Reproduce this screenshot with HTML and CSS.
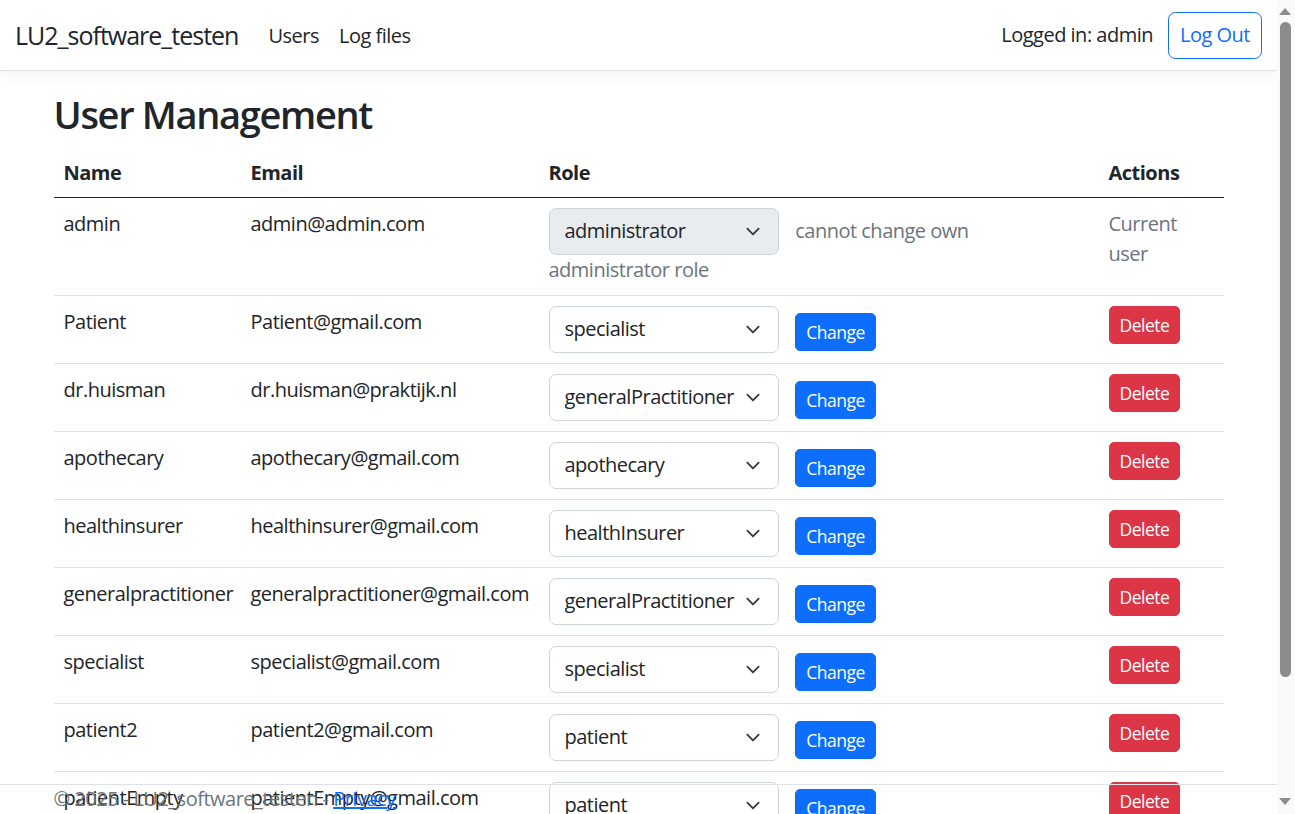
FILE: index.html
```html
<!DOCTYPE html>
<html lang="en">
<head>
<meta charset="utf-8">
<title>User Management - LU2_software_testen</title>
<link rel="stylesheet" href="styles.css">
</head>
<body>
<div class="page">
  <header class="navbar">
    <div class="nav-left">
      <a class="brand" href="#">LU2_software_testen</a>
      <ul class="nav">
        <li><a class="nav-link" href="#">Users</a></li>
        <li><a class="nav-link" href="#">Log files</a></li>
      </ul>
    </div>
    <div class="nav-right">
      <span class="nav-text">Logged in: admin</span>
      <button class="btn btn-outline-primary">Log Out</button>
    </div>
  </header>

  <main class="container main">
    <h2 class="title">User Management</h2>
    <table class="table">
      <colgroup>
        <col class="c-name"><col class="c-email"><col class="c-role"><col class="c-actions">
      </colgroup>
      <thead>
        <tr><th>Name</th><th>Email</th><th>Role</th><th>Actions</th></tr>
      </thead>
      <tbody>
        <tr>
          <td>admin</td>
          <td>admin@admin.com</td>
          <td><div class="select disabled"><span class="select-text">administrator</span><svg class="chev" viewBox="0 0 16 16" width="20" height="15"><path d="m2 5 6 6 6-6" fill="none" stroke="#343a40" stroke-width="2" stroke-linecap="round" stroke-linejoin="round"/></svg></div> <span class="note">cannot change own administrator role</span></td>
          <td><span class="muted">Current user</span></td>
        </tr>
        <tr>
          <td>Patient</td>
          <td>Patient@gmail.com</td>
          <td><div class="select"><span class="select-text">specialist</span><svg class="chev" viewBox="0 0 16 16" width="20" height="15"><path d="m2 5 6 6 6-6" fill="none" stroke="#343a40" stroke-width="2" stroke-linecap="round" stroke-linejoin="round"/></svg></div> <button class="btn btn-sm btn-primary change">Change</button></td>
          <td><button class="btn btn-sm btn-danger">Delete</button></td>
        </tr>
        <tr>
          <td>dr.huisman</td>
          <td>dr.huisman@praktijk.nl</td>
          <td><div class="select"><span class="select-text">generalPractitioner</span><svg class="chev" viewBox="0 0 16 16" width="20" height="15"><path d="m2 5 6 6 6-6" fill="none" stroke="#343a40" stroke-width="2" stroke-linecap="round" stroke-linejoin="round"/></svg></div> <button class="btn btn-sm btn-primary change">Change</button></td>
          <td><button class="btn btn-sm btn-danger">Delete</button></td>
        </tr>
        <tr>
          <td>apothecary</td>
          <td>apothecary@gmail.com</td>
          <td><div class="select"><span class="select-text">apothecary</span><svg class="chev" viewBox="0 0 16 16" width="20" height="15"><path d="m2 5 6 6 6-6" fill="none" stroke="#343a40" stroke-width="2" stroke-linecap="round" stroke-linejoin="round"/></svg></div> <button class="btn btn-sm btn-primary change">Change</button></td>
          <td><button class="btn btn-sm btn-danger">Delete</button></td>
        </tr>
        <tr>
          <td>healthinsurer</td>
          <td>healthinsurer@gmail.com</td>
          <td><div class="select"><span class="select-text">healthInsurer</span><svg class="chev" viewBox="0 0 16 16" width="20" height="15"><path d="m2 5 6 6 6-6" fill="none" stroke="#343a40" stroke-width="2" stroke-linecap="round" stroke-linejoin="round"/></svg></div> <button class="btn btn-sm btn-primary change">Change</button></td>
          <td><button class="btn btn-sm btn-danger">Delete</button></td>
        </tr>
        <tr>
          <td>generalpractitioner</td>
          <td>generalpractitioner@gmail.com</td>
          <td><div class="select"><span class="select-text">generalPractitioner</span><svg class="chev" viewBox="0 0 16 16" width="20" height="15"><path d="m2 5 6 6 6-6" fill="none" stroke="#343a40" stroke-width="2" stroke-linecap="round" stroke-linejoin="round"/></svg></div> <button class="btn btn-sm btn-primary change">Change</button></td>
          <td><button class="btn btn-sm btn-danger">Delete</button></td>
        </tr>
        <tr>
          <td>specialist</td>
          <td>specialist@gmail.com</td>
          <td><div class="select"><span class="select-text">specialist</span><svg class="chev" viewBox="0 0 16 16" width="20" height="15"><path d="m2 5 6 6 6-6" fill="none" stroke="#343a40" stroke-width="2" stroke-linecap="round" stroke-linejoin="round"/></svg></div> <button class="btn btn-sm btn-primary change">Change</button></td>
          <td><button class="btn btn-sm btn-danger">Delete</button></td>
        </tr>
        <tr>
          <td>patient2</td>
          <td>patient2@gmail.com</td>
          <td><div class="select"><span class="select-text">patient</span><svg class="chev" viewBox="0 0 16 16" width="20" height="15"><path d="m2 5 6 6 6-6" fill="none" stroke="#343a40" stroke-width="2" stroke-linecap="round" stroke-linejoin="round"/></svg></div> <button class="btn btn-sm btn-primary change">Change</button></td>
          <td><button class="btn btn-sm btn-danger">Delete</button></td>
        </tr>
        <tr>
          <td>patientEmpty</td>
          <td>patientEmpty@gmail.com</td>
          <td><div class="select"><span class="select-text">patient</span><svg class="chev" viewBox="0 0 16 16" width="20" height="15"><path d="m2 5 6 6 6-6" fill="none" stroke="#343a40" stroke-width="2" stroke-linecap="round" stroke-linejoin="round"/></svg></div> <button class="btn btn-sm btn-primary change">Change</button></td>
          <td><button class="btn btn-sm btn-danger">Delete</button></td>
        </tr>
      </tbody>
    </table>
  </main>

  <footer class="footer">
    <div class="container">&copy; 2025 - LU2_software_testen - <a href="#">Privacy</a></div>
  </footer>
</div>
<div class="scrollbar">
  <svg class="sb-arrow" viewBox="0 0 12 7" width="12" height="7"><path d="M6 0 12 7H0z" fill="#8c8c8c"/></svg>
  <div class="sb-thumb"></div>
  <div class="sb-space"></div>
  <svg class="sb-arrow" viewBox="0 0 12 7" width="12" height="7"><path d="M0 0h12L6 7z" fill="#8c8c8c"/></svg>
</div>
</body>
</html>
```

FILE: styles.css
```css
* { box-sizing: border-box; }

html, body {
  margin: 0;
  height: 100%;
  overflow: hidden;
}

body {
  display: flex;
  font-family: "Open Sans", "Noto Sans", sans-serif;
  font-size: 20px;
  line-height: 30px;
  letter-spacing: -0.025em;
  color: #212529;
  background: #fff;
}

a { color: #0d6efd; }

.page {
  flex: 1;
  min-width: 0;
  height: 814px;
  position: relative;
  overflow: hidden;
}

/* navbar */
.navbar {
  height: 71px;
  padding: 10px 15px;
  border-bottom: 1px solid #dee2e6;
  box-shadow: 0 5px 15px rgba(0, 0, 0, 0.05);
  display: flex;
  align-items: center;
  justify-content: space-between;
  background: #fff;
}

.nav-left, .nav-right {
  display: flex;
  align-items: center;
}

.brand {
  font-size: 25px;
  line-height: 37.5px;
  padding: 7px 0 5.5px;
  margin-right: 20px;
  letter-spacing: -0.04em;
  color: #212529;
  text-decoration: none;
}

.nav {
  display: flex;
  list-style: none;
  margin: 0;
  padding: 0;
}

.nav-link {
  display: block;
  padding: 11px 10px 9px;
  color: #212529;
  text-decoration: none;
}

.nav-link.second { margin-left: -2px; }

.nav-text {
  padding: 10px 0;
  margin-right: 15px;
}

/* buttons */
.btn {
  display: inline-block;
  font-family: inherit;
  letter-spacing: inherit;
  font-size: 20px;
  line-height: 30px;
  padding: 7.5px 15px;
  border: 1px solid transparent;
  border-radius: 7.5px;
  background: transparent;
  cursor: pointer;
}

.btn-outline-primary {
  color: #0d6efd;
  border-color: #0d6efd;
  padding: 7.5px 11px;
}

.btn-sm {
  font-size: 17.5px;
  line-height: 26.25px;
  padding: 5px 10px;
  border-radius: 5px;
}

.btn-primary {
  color: #fff;
  background: #0d6efd;
  border-color: #0d6efd;
}

.btn-danger {
  color: #fff;
  background: #dc3545;
  border-color: #dc3545;
}

.change {
  margin-left: 12px;
  vertical-align: -3px;
}

/* content */
.container {
  width: 1200px;
  margin: 0 auto;
  padding: 0 15px;
}

.main {
  margin-top: 20px;
}

.title {
  margin: 0 0 10px;
  padding-top: 2px;
  font-size: 38px;
  font-weight: 600;
  line-height: 43.6px;
  letter-spacing: -0.035em;
}

.table {
  width: 100%;
  border-collapse: collapse;
  table-layout: fixed;
}

.c-name { width: 187px; }
.c-email { width: 298px; }
.c-role { width: 560px; }
.c-actions { width: 125px; }

.table th,
.table td {
  padding: 10px;
  text-align: left;
  vertical-align: top;
  border-bottom: 1px solid #dee2e6;
}

.table th {
  font-weight: 700;
  padding: 11px 10px 9px;
}

.table thead th {
  border-bottom-color: #212529;
}

.table td:nth-child(1),
.table td:nth-child(2) {
  white-space: nowrap;
}

.table td:nth-child(1),
.table td:nth-child(2),
.table td:nth-child(4) {
  padding-top: 11px;
  padding-bottom: 9px;
}

.select {
  display: inline-flex;
  align-items: center;
  width: 230px;
  padding: 7.5px 15px;
  border: 1px solid #ced4da;
  border-radius: 7px;
  background: #fff;
  vertical-align: baseline;
}

.select.disabled {
  background: #e9ecef;
}

.select-text {
  flex: 1;
  min-width: 0;
  overflow: hidden;
  white-space: nowrap;
}

.chev {
  flex: none;
  margin-left: 4px;
}

.note {
  margin-left: 12px;
  color: #6c757d;
}

.muted {
  color: #6c757d;
}

.table td:nth-child(4) .btn {
  margin-top: -1px;
}

/* footer */
.footer {
  position: absolute;
  left: 0;
  right: 0;
  bottom: 0;
  height: 30px;
  border-top: 1px solid #dee2e6;
  line-height: 28px;
  color: #6c757d;
  white-space: nowrap;
}

/* scrollbar */
.scrollbar {
  flex: none;
  width: 18px;
  height: 814px;
  background: #fafafa;
  display: flex;
  flex-direction: column;
  align-items: flex-start;
  padding: 8px 0 9px 2px;
}

.sb-thumb {
  width: 11px;
  height: 655px;
  margin: 7px 0 0 1px;
  border-radius: 6px;
  background: #8c8c8c;
}

.sb-space {
  flex: 1;
}
```
